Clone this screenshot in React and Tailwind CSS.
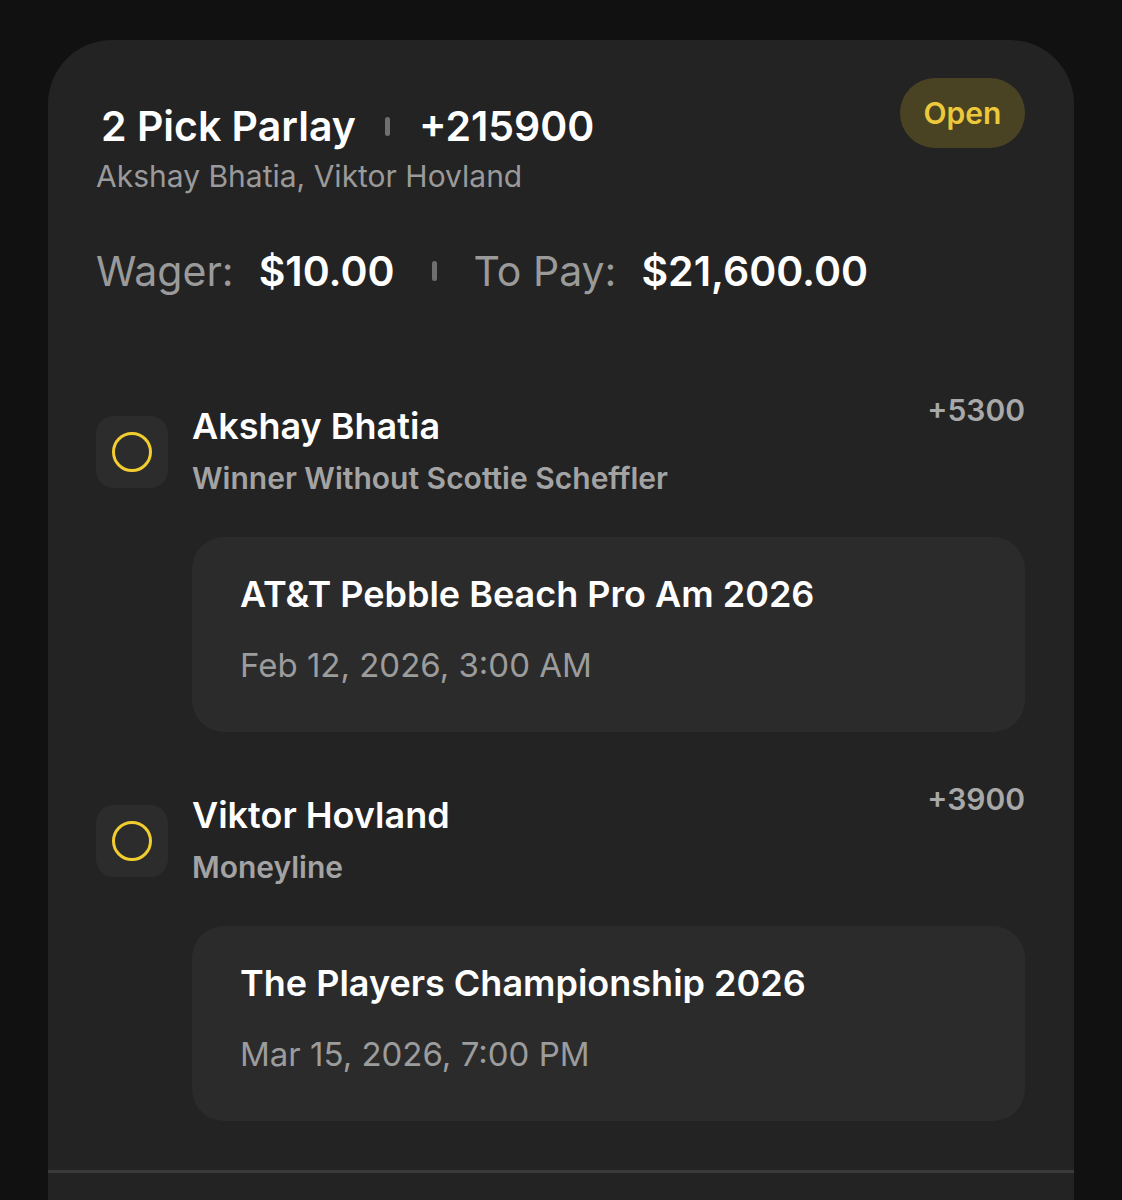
import React from 'react'

const legs = [
  {
    name: 'Akshay Bhatia',
    market: 'Winner Without Scottie Scheffler',
    odds: '+5300',
    event: 'AT&T Pebble Beach Pro Am 2026',
    date: 'Feb 12, 2026, 3:00 AM',
  },
  {
    name: 'Viktor Hovland',
    market: 'Moneyline',
    odds: '+3900',
    event: 'The Players Championship 2026',
    date: 'Mar 15, 2026, 7:00 PM',
  },
]

function Dot({ className }) {
  return <span className={`inline-block w-[5px] rounded-full bg-[#6f6f6f] ${className}`} />
}

function Leg({ leg }) {
  return (
    <div className="flex flex-col">
      <div className="flex items-start">
        <div className="mt-[23px] flex h-[72px] w-[72px] shrink-0 items-center justify-center rounded-[18px] bg-[#2c2c2c]">
          <span className="block h-[40px] w-[40px] rounded-full border-[3px] border-[#f2cd2f]" />
        </div>
        <div className="ml-[24px] mt-[12px] flex-1">
          <div className="text-[36px] font-semibold leading-[42px] text-white">{leg.name}</div>
          <div className="mt-[13px] text-[30px] font-semibold leading-[36px] text-[#a3a3a3]">{leg.market}</div>
        </div>
        <div className="text-[30px] font-semibold leading-[34px] text-[#a8a8a8]">{leg.odds}</div>
      </div>
      <div className="ml-[96px] mt-[41px] rounded-[32px] bg-[#2b2b2b] pl-[48px] pr-8 pt-[37px] pb-[49px]">
        <div className="text-[36px] font-semibold leading-[40px] text-white">{leg.event}</div>
        <div className="mt-[33px] text-[33px] leading-[36px] text-[#9c9c9c]">{leg.date}</div>
      </div>
    </div>
  )
}

export default function App() {
  return (
    <div className="min-h-[1200px] overflow-hidden bg-[#111111] pt-[40px] font-['Inter',sans-serif]">
      <div className="ml-[48px] h-[1200px] w-[1026px] rounded-t-[64px] bg-[#232323]">
        <div className="px-[48px] pr-[49px] pt-[38px]">
          {/* Header */}
          <div className="flex items-start justify-between">
            <div className="pt-[24px]">
              <div className="flex items-center pl-[5px] text-[41px] font-semibold leading-[48px] text-white">
                <span>2 Pick Parlay</span>
                <Dot className="mx-[29px] h-[19px]" />
                <span>+215900</span>
              </div>
              <div className="mt-[9px] text-[30px] leading-[34px] text-[#9a9a9a]">
                Akshay Bhatia, Viktor Hovland
              </div>
            </div>
            <div className="flex h-[70px] w-[125px] items-center justify-center rounded-full bg-[#4a4323] text-[30px] font-semibold text-[#ebc93a]">
              Open
            </div>
          </div>

          {/* Wager */}
          <div className="mt-[54px] flex items-center text-[41px] leading-[48px]">
            <span className="text-[#9a9a9a]">Wager:</span>
            <span className="ml-[25px] font-semibold text-white">$10.00</span>
            <Dot className="mx-[37px] h-[20px]" />
            <span className="text-[#9a9a9a]">To Pay:</span>
            <span className="ml-[25px] font-semibold text-white">$21,600.00</span>
          </div>

          {/* Legs */}
          <div className="mt-[98px] flex flex-col gap-[50px]">
            {legs.map((leg) => (
              <Leg key={leg.name} leg={leg} />
            ))}
          </div>
        </div>
        <div className="mt-[49px] border-t-[3px] border-[#3a3a3a]" />
      </div>
    </div>
  )
}
